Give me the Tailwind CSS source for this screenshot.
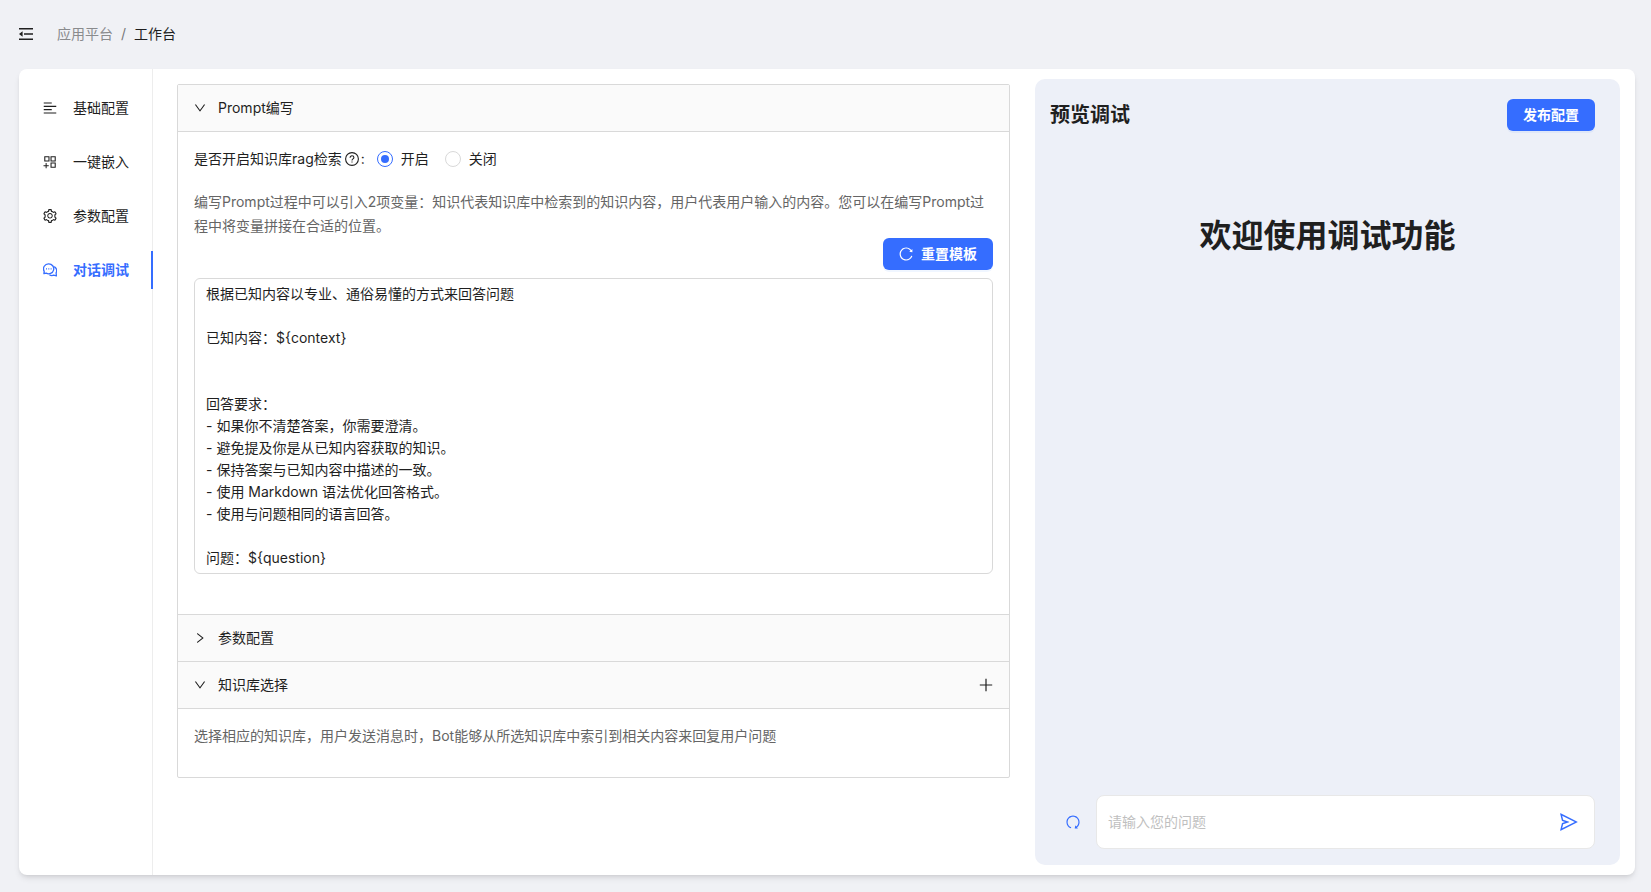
<!DOCTYPE html>
<html lang="zh-CN">
<head>
<meta charset="utf-8">
<meta name="viewport" content="width=device-width, initial-scale=1">
<title>工作台</title>
<script src="https://cdn.jsdelivr.net/npm/@tailwindcss/browser@4"></script>
</head>
<body class="flex min-h-screen flex-col bg-[#f0f1f5] font-['Inter','Noto_Sans_CJK_SC',sans-serif] text-sm leading-[22px] text-[#1f1f1f]">

<svg class="hidden" aria-hidden="true">
  <symbol id="reload" viewBox="64 64 896 896"><path d="M909.1 209.3l-56.4 44.1C775.8 155.1 656.2 92 521.9 92 290 92 102.3 279.5 102 511.5 101.7 743.7 289.8 932 521.9 932c181.3 0 335.8-115 394.6-276.1 1.5-4.2-.7-8.9-4.9-10.3l-56.7-19.5a8 8 0 00-10.1 4.8c-1.8 5-3.8 10-5.900 14.900-17.300 41-42.100 77.800-73.700 109.400A344.770 344.770 0 01655.900 829c-42.300 17.900-87.400 27-133.800 27-46.500 0-91.500-9.100-133.800-27A341.500 341.500 0 01279 755.200a342.160 342.160 0 01-73.700-109.400c-17.900-42.400-27-87.400-27-133.900s9.100-91.500 27-133.900c17.300-41 42.100-77.800 73.700-109.400 31.600-31.600 68.400-56.400 109.300-73.800 42.300-17.900 87.400-27 133.800-27 46.500 0 91.500 9.100 133.800 27a341.500 341.500 0 01109.300 73.800c9.900 9.900 19.200 20.400 27.800 31.400l-60.200 47a8 8 0 003 14.100l175.600 43c5 1.200 9.900-2.600 9.900-7.700l.8-180.900c-.1-6.600-7.800-10.300-13-6.200z"/></symbol>
  <symbol id="down" viewBox="64 64 896 896"><path d="M884 256h-75c-5.1 0-9.9 2.5-12.9 6.6L512 654.2 227.9 262.6c-3-4.1-7.8-6.6-12.9-6.6h-75c-6.500 0-10.300 7.400-6.500 12.700l352.600 486.100c12.800 17.600 39 17.600 51.700 0l352.600-486.100c3.900-5.300.1-12.700-6.400-12.700z"/></symbol>
  <symbol id="right" viewBox="64 64 896 896"><path d="M765.7 486.8L314.9 134.7A7.97 7.97 0 00302 141v77.300c0 4.900 2.300 9.600 6.100 12.600l360 281.100-360 281.100c-3.900 3-6.100 7.700-6.100 12.600V883c0 6.700 7.700 10.400 12.900 6.300l450.800-352.100a31.960 31.960 0 000-50.400z"/></symbol>
</svg>

<header class="flex h-[69px] items-center gap-6 pb-0.5 pl-[19px]">
  <button type="button" aria-label="收起菜单" class="block">
    <svg class="size-3.5" viewBox="0 0 14 14" fill="currentColor"><path d="M0 1h14v1.600H0zM5 6.200h9v1.600H5zM0 11.400h14V13H0zM0 7l3.600-2.800v5.600z"/></svg>
  </button>
  <nav aria-label="面包屑" class="flex">
    <a href="#" class="text-[#8a8b8d]">应用平台</a>
    <span class="px-2 text-[#77787a]">/</span>
    <a href="#" aria-current="page">工作台</a>
  </nav>
</header>

<div class="mr-4 mb-[17px] ml-[19px] flex flex-1 rounded-lg bg-white shadow-md">
  <nav aria-label="应用配置" class="flex w-[134px] shrink-0 flex-col gap-4 border-r border-[#ededed] pt-5">
    <a href="#" class="-mr-px flex h-[38px] items-center gap-4 pl-6">
      <svg class="size-3.5" viewBox="64 64 896 896" fill="currentColor"><path d="M112 158h512v72H112zM112 370h800v72H112zM112 582h512v72H112zM112 794h800v72H112z"/></svg>基础配置</a>
    <a href="#" class="-mr-px flex h-[38px] items-center gap-4 pl-6">
      <svg class="size-3.5" viewBox="64 64 896 896" fill="currentColor"><path d="M464 144H160c-8.8 0-16 7.2-16 16v304c0 8.800 7.200 16 16 16h304c8.800 0 16-7.200 16-16V160c0-8.800-7.200-16-16-16zm-52 268H212V212h200v200zm452-268H560c-8.800 0-16 7.200-16 16v304c0 8.800 7.200 16 16 16h304c8.800 0 16-7.200 16-16V160c0-8.800-7.200-16-16-16zm-52 268H612V212h200v200zm52 132H560c-8.800 0-16 7.200-16 16v304c0 8.800 7.200 16 16 16h304c8.800 0 16-7.200 16-16V560c0-8.800-7.200-16-16-16zm-52 268H612V612h200v200zM424 712H296V584c0-4.400-3.600-8-8-8h-48c-4.400 0-8 3.600-8 8v128H104c-4.400 0-8 3.600-8 8v48c0 4.400 3.600 8 8 8h128v128c0 4.400 3.600 8 8 8h48c4.400 0 8-3.600 8-8V776h128c4.400 0 8-3.600 8-8v-48c0-4.400-3.600-8-8-8z"/></svg>一键嵌入</a>
    <a href="#" class="-mr-px flex h-[38px] items-center gap-4 pl-6">
      <svg class="size-3.5" viewBox="64 64 896 896" fill="currentColor"><path d="M924.8 625.7l-65.5-56c3.1-19 4.7-38.4 4.7-57.8s-1.6-38.8-4.7-57.8l65.5-56a32.03 32.03 0 009.3-35.2l-.9-2.6a443.74 443.74 0 00-79.7-137.9l-1.8-2.1a32.12 32.12 0 00-35.1-9.5l-81.3 28.9c-30-24.6-63.5-44-99.7-57.6l-15.7-85a32.05 32.05 0 00-25.8-25.7l-2.7-.5c-52.1-9.4-106.9-9.4-159 0l-2.7.5a32.05 32.05 0 00-25.8 25.7l-15.8 85.4a351.86 351.86 0 00-99 57.4l-81.9-29.1a32 32 0 00-35.1 9.5l-1.8 2.1a446.02 446.02 0 00-79.7 137.9l-.9 2.6c-4.5 12.5-.8 26.5 9.3 35.2l66.3 56.6c-3.1 18.8-4.6 38-4.6 57.1 0 19.2 1.5 38.4 4.6 57.1L99 625.5a32.03 32.03 0 00-9.3 35.2l.9 2.6c18.1 50.4 44.9 96.9 79.7 137.9l1.8 2.1a32.12 32.12 0 0035.1 9.5l81.9-29.1c29.8 24.5 63.1 43.9 99 57.4l15.8 85.4a32.05 32.05 0 0025.8 25.7l2.7.5a449.4 449.4 0 00159 0l2.7-.5a32.05 32.05 0 0025.8-25.7l15.7-85a350 350 0 0099.7-57.6l81.3 28.9a32 32 0 0035.1-9.5l1.8-2.1c34.8-41.1 61.6-87.5 79.7-137.9l.9-2.6c4.5-12.3.8-26.3-9.3-35zM788.3 465.9c2.5 15.1 3.8 30.6 3.8 46.1s-1.3 31-3.8 46.1l-6.6 40.1 74.7 63.9a370.03 370.03 0 01-42.6 73.6L721 702.8l-31.4 25.8c-23.9 19.6-50.5 35-79.3 45.8l-38.1 14.3-17.9 97a377.5 377.5 0 01-85 0l-17.9-97.2-37.8-14.5c-28.5-10.8-55-26.2-78.7-45.7l-31.4-25.9-93.4 33.2c-17-22.9-31.2-47.6-42.6-73.6l75.5-64.5-6.5-40c-2.4-14.9-3.7-30.3-3.7-45.5 0-15.3 1.2-30.6 3.7-45.5l6.5-40-75.5-64.5c11.3-26.1 25.6-50.7 42.6-73.6l93.4 33.2 31.4-25.9c23.7-19.5 50.2-34.9 78.7-45.7l37.9-14.3 17.9-97.2c28.1-3.2 56.8-3.2 85 0l17.9 97 38.1 14.3c28.7 10.8 55.4 26.2 79.3 45.8l31.4 25.8 92.8-32.9c17 22.9 31.2 47.6 42.6 73.6L781.8 426l6.5 39.9zM512 326c-97.2 0-176 78.8-176 176s78.8 176 176 176 176-78.8 176-176-78.8-176-176-176zm79.2 255.2A111.6 111.6 0 01512 614c-29.9 0-58-11.7-79.2-32.8A111.6 111.6 0 01400 502c0-29.9 11.7-58 32.8-79.2C454 401.6 482.1 390 512 390c29.9 0 58 11.6 79.2 32.8A111.6 111.6 0 01624 502c0 29.9-11.7 58-32.8 79.2z"/></svg>参数配置</a>
    <a href="#" aria-current="page" class="-mr-px flex h-[38px] items-center gap-4 border-r-2 border-[#356dff] pl-6 font-bold text-[#356dff]">
      <svg class="size-3.5" viewBox="0 0 14 14" fill="none" stroke="currentColor" stroke-width="1.3" stroke-linejoin="round"><path d="M5.7.8a5 5 0 1 1-2.500 9.300L.9 10.600l.3-2.300A5 5 0 0 1 5.700.8z"/><path d="M11.200 3.600a4.600 4.600 0 0 1 1.900 6.300l.3 2.900-2.700-.6a4.600 4.600 0 0 1-4.300-.5"/><path d="M3 5.900h1M5.300 5.900h1M7.600 5.900h1" stroke-width="1.200"/></svg>对话调试</a>
  </nav>

  <main class="grid flex-1 grid-cols-[833fr_585fr] gap-[25px] pt-2.5 pr-[15px] pb-2.5 pl-6">
    <div class="mt-[5px] self-start rounded-xs border border-[#d9d9d9]">
      <section>
        <h2 class="border-b border-[#d9d9d9] bg-[#fafafa]">
          <button type="button" aria-expanded="true" class="flex w-full items-center gap-3 px-4 py-3 text-left"><svg class="size-3" fill="currentColor"><use href="#down"/></svg>Prompt编写</button>
        </h2>
        <div class="px-4 pt-4 pb-10">
          <fieldset class="flex items-center">
            <legend class="float-left flex items-center pr-3">是否开启知识库rag检索
              <svg class="ml-[3px] size-3.5" viewBox="0 0 14 14" fill="none" stroke="currentColor" stroke-width="1.100"><circle cx="7" cy="7" r="6.400"/><path d="M5.100 5.700C5.100 4.500 5.900 3.800 7 3.800s1.900.7 1.900 1.700c0 1.300-1.900 1.400-1.900 2.900"/><path d="M7 9.400v1.200"/></svg><span class="pl-0.5">:</span></legend>
            <label class="flex items-center gap-2 pr-4"><input type="radio" name="rag" checked class="size-4 appearance-none rounded-full border border-[#d9d9d9] bg-white bg-clip-content p-[3px] checked:border-[#356dff] checked:bg-[#356dff]">开启</label>
            <label class="flex items-center gap-2"><input type="radio" name="rag" class="size-4 appearance-none rounded-full border border-[#d9d9d9] bg-white bg-clip-content p-[3px] checked:border-[#356dff] checked:bg-[#356dff]">关闭</label>
          </fieldset>
          <p class="mt-5 leading-6 text-[#656565]">编写Prompt过程中可以引入2项变量：知识代表知识库中检索到的知识内容，用户代表用户输入的内容。您可以在编写Prompt过程中将变量拼接在合适的位置。</p>
          <div class="flex justify-end">
            <button type="button" class="flex h-8 items-center gap-2 rounded-md bg-[#356dff] px-4 font-bold text-white shadow-[0_2px_0_rgba(5,95,255,0.06)]"><svg class="size-3.5" fill="currentColor"><use href="#reload"/></svg>重置模板</button>
          </div>
          <textarea aria-label="Prompt模板" rows="13" class="mt-2 block w-full resize-none overflow-hidden rounded-md border border-[#d9d9d9] px-[11px] py-1">根据已知内容以专业、通俗易懂的方式来回答问题

已知内容：${context}


回答要求：
- 如果你不清楚答案，你需要澄清。
- 避免提及你是从已知内容获取的知识。
- 保持答案与已知内容中描述的一致。
- 使用 Markdown 语法优化回答格式。
- 使用与问题相同的语言回答。

问题：${question}</textarea>
        </div>
      </section>
      <section>
        <h2 class="border-t border-[#d9d9d9] bg-[#fafafa]">
          <button type="button" aria-expanded="false" class="flex w-full items-center gap-3 px-4 py-3 text-left"><svg class="size-3" fill="currentColor"><use href="#right"/></svg>参数配置</button>
        </h2>
      </section>
      <section>
        <div class="flex items-center border-y border-[#d9d9d9] bg-[#fafafa] pr-4">
          <h2 class="flex-1"><button type="button" aria-expanded="true" class="flex w-full items-center gap-3 px-4 py-3 text-left"><svg class="size-3" fill="currentColor"><use href="#down"/></svg>知识库选择</button></h2>
          <button type="button" aria-label="添加知识库"><svg class="size-3.5" viewBox="0 0 14 14" fill="none" stroke="currentColor" stroke-width="1.200"><path d="M7 .8v12.400M.8 7h12.400"/></svg></button>
        </div>
        <p class="px-4 pt-4 pb-[30px] text-[#656565]">选择相应的知识库，用户发送消息时，Bot能够从所选知识库中索引到相关内容来回复用户问题</p>
      </section>
    </div>

    <section class="flex flex-col rounded-[10px] bg-[#edf0f8] pt-5 pr-[25px] pb-4 pl-[15px]">
      <div class="flex items-center justify-between">
        <h2 class="text-xl font-bold">预览调试</h2>
        <button type="button" class="h-8 rounded-md bg-[#356dff] px-4 font-bold text-white shadow-[0_2px_0_rgba(5,95,255,0.06)]">发布配置</button>
      </div>
      <h1 class="mt-20 pl-2.5 text-center text-[32px] leading-[50px] font-bold">欢迎使用调试功能</h1>
      <form class="mt-auto flex items-center gap-4 pl-4">
        <button type="button" aria-label="清空对话" class="text-[#356dff]"><svg class="size-3.5 rotate-90" fill="currentColor"><use href="#reload"/></svg></button>
        <div class="flex h-[54px] flex-1 items-center rounded-lg border border-[#e8e8e8] bg-white pr-4 pl-[11px]">
          <input type="text" aria-label="问题" placeholder="请输入您的问题" class="min-w-0 flex-1 outline-none placeholder:text-[#bfbfbf]">
          <button type="submit" aria-label="发送" class="text-[#356dff]"><svg class="size-[18px]" viewBox="64 64 896 896" fill="currentColor"><path d="M931.4 498.9L94.9 79.5c-3.4-1.7-7.3-2.1-11-1.2a15.99 15.99 0 00-11.7 19.3l86.2 352.2c1.3 5.3 5.2 9.6 10.4 11.3l147.7 50.7-147.6 50.7c-5.2 1.8-9.1 6-10.3 11.3L72.2 926.5c-.9 3.7-.5 7.6 1.2 10.9 3.9 7.9 13.5 11.1 21.5 7.2l836.5-417c3.1-1.5 5.6-4.1 7.2-7.1 3.9-8 .7-17.6-7.2-21.6zM170.8 826.3l50.3-205.6 295.2-101.3c2.3-.8 4.2-2.6 5-5 1.4-4.2-.8-8.7-5-10.2L221.1 403 171 198.2l628 314.9-628.2 313.2z"/></svg></button>
        </div>
      </form>
    </section>
  </main>
</div>
</body>
</html>
